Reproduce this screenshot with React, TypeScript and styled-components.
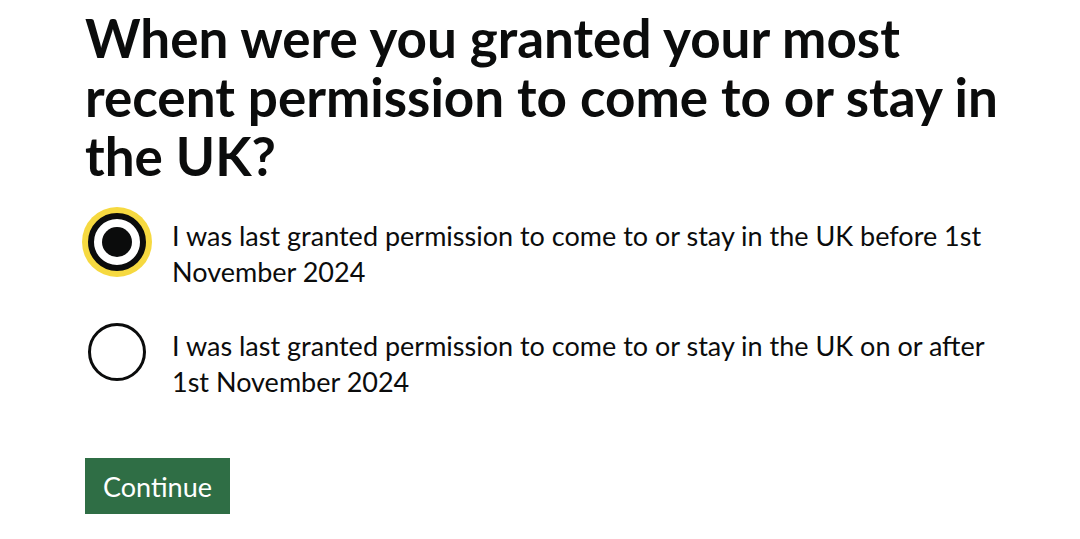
import React, { useState } from 'react';
import styled, { createGlobalStyle } from 'styled-components';

const GlobalStyle = createGlobalStyle`
  html, body {
    margin: 0;
    padding: 0;
    background: #ffffff;
  }
  body {
    font-family: Lato, "Noto Sans", "Liberation Sans", Arial, sans-serif;
    color: #0b0c0c;
  }
`;

const Page = styled.main`
  padding: 8px 40px 0 85px;
`;

const Fieldset = styled.fieldset`
  margin: 0;
  padding: 0;
  border: 0;
  min-width: 0;
`;

const Legend = styled.legend`
  padding: 0;
  margin: 0 0 22px;
  max-width: 940px;
`;

const Heading = styled.h1`
  margin: 0;
  font-size: 53px;
  line-height: 59px;
  font-weight: 700;
  color: #0b0c0c;
`;

const Radios = styled.div`
  display: flex;
  flex-direction: column;
  gap: 27px;
`;

const Item = styled.label`
  display: flex;
  align-items: flex-start;
  gap: 20px;
  cursor: pointer;
`;

const Control = styled.span`
  flex: none;
  width: 70px;
  height: 70px;
  display: flex;
  align-items: center;
  justify-content: center;
  margin-left: -3px;
`;

const Circle = styled.span<{ $checked: boolean }>`
  box-sizing: border-box;
  width: 58px;
  height: 58px;
  border-radius: 50%;
  border: ${p => (p.$checked ? '6px' : '3px')} solid #0b0c0c;
  box-shadow: ${p => (p.$checked ? '0 0 0 6px #f6d940' : 'none')};
  display: flex;
  align-items: center;
  justify-content: center;
  background: #fff;
`;

const Dot = styled.span`
  width: 30px;
  height: 30px;
  border-radius: 50%;
  background: #0b0c0c;
`;

const HiddenInput = styled.input`
  position: absolute;
  opacity: 0;
  width: 1px;
  height: 1px;
`;

const LabelText = styled.span`
  font-size: 27px;
  line-height: 36px;
  padding-top: 11px;
  max-width: 830px;
`;

const Button = styled.button`
  margin-top: 58px;
  font-family: inherit;
  font-size: 27px;
  line-height: 32px;
  color: #ffffff;
  background: #2f6e45;
  border: 0;
  border-radius: 0;
  padding: 13px 18px 11px;
  box-shadow: 0 3px 0 #0b2c17;
  cursor: pointer;
`;

const options = [
  'I was last granted permission to come to or stay in the UK before 1st November 2024',
  'I was last granted permission to come to or stay in the UK on or after 1st November 2024',
];

export default function App() {
  const [selected, setSelected] = useState(0);
  return (
    <>
      <GlobalStyle />
      <Page>
        <Fieldset>
          <Legend>
            <Heading>When were you granted your most recent permission to come to or stay in the UK?</Heading>
          </Legend>
          <Radios>
            {options.map((text, i) => (
              <Item key={i}>
                <HiddenInput
                  type="radio"
                  name="permission"
                  checked={selected === i}
                  onChange={() => setSelected(i)}
                />
                <Control>
                  <Circle $checked={selected === i}>{selected === i && <Dot />}</Circle>
                </Control>
                <LabelText>{text}</LabelText>
              </Item>
            ))}
          </Radios>
        </Fieldset>
        <Button type="button">Continue</Button>
      </Page>
    </>
  );
}
